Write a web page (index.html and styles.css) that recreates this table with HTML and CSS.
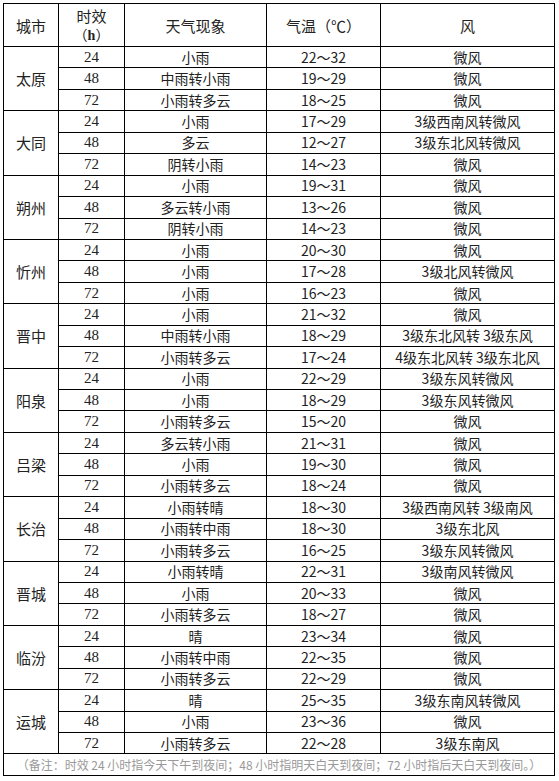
FILE: index.html
```html
<!DOCTYPE html>
<html lang="zh">
<head>
<meta charset="utf-8">
<link rel="stylesheet" href="styles.css">
</head>
<body>
<table class="wx">
<colgroup>
<col class="c1"><col class="c2"><col class="c3"><col class="c4"><col class="c5">
</colgroup>
<thead>
<tr class="hd">
<th>城市</th>
<th><div>时效</div><div class="hh">（<span class="h">h</span>）</div></th>
<th>天气现象</th>
<th>气温（℃）</th>
<th>风</th>
</tr>
</thead>
<tbody>
<tr><td class="city" rowspan="3">太原</td><td class="n">24</td><td>小雨</td><td>22～32</td><td>微风</td></tr>
<tr><td class="n">48</td><td>中雨转小雨</td><td>19～29</td><td>微风</td></tr>
<tr><td class="n">72</td><td>小雨转多云</td><td>18～25</td><td>微风</td></tr>

<tr><td class="city" rowspan="3">大同</td><td class="n">24</td><td>小雨</td><td>17～29</td><td>3级西南风转微风</td></tr>
<tr><td class="n">48</td><td>多云</td><td>12～27</td><td>3级东北风转微风</td></tr>
<tr><td class="n">72</td><td>阴转小雨</td><td>14～23</td><td>微风</td></tr>

<tr><td class="city" rowspan="3">朔州</td><td class="n">24</td><td>小雨</td><td>19～31</td><td>微风</td></tr>
<tr><td class="n">48</td><td>多云转小雨</td><td>13～26</td><td>微风</td></tr>
<tr><td class="n">72</td><td>阴转小雨</td><td>14～23</td><td>微风</td></tr>

<tr><td class="city" rowspan="3">忻州</td><td class="n">24</td><td>小雨</td><td>20～30</td><td>微风</td></tr>
<tr><td class="n">48</td><td>小雨</td><td>17～28</td><td>3级北风转微风</td></tr>
<tr><td class="n">72</td><td>小雨</td><td>16～23</td><td>微风</td></tr>

<tr><td class="city" rowspan="3">晋中</td><td class="n">24</td><td>小雨</td><td>21～32</td><td>微风</td></tr>
<tr><td class="n">48</td><td>中雨转小雨</td><td>18～29</td><td>3级东北风转 3级东风</td></tr>
<tr><td class="n">72</td><td>小雨转多云</td><td>17～24</td><td>4级东北风转 3级东北风</td></tr>

<tr><td class="city" rowspan="3">阳泉</td><td class="n">24</td><td>小雨</td><td>22～29</td><td>3级东风转微风</td></tr>
<tr><td class="n">48</td><td>小雨</td><td>18～29</td><td>3级东风转微风</td></tr>
<tr><td class="n">72</td><td>小雨转多云</td><td>15～20</td><td>微风</td></tr>

<tr><td class="city" rowspan="3">吕梁</td><td class="n">24</td><td>多云转小雨</td><td>21～31</td><td>微风</td></tr>
<tr><td class="n">48</td><td>小雨</td><td>19～30</td><td>微风</td></tr>
<tr><td class="n">72</td><td>小雨转多云</td><td>18～24</td><td>微风</td></tr>

<tr><td class="city" rowspan="3">长治</td><td class="n">24</td><td>小雨转晴</td><td>18～30</td><td>3级西南风转 3级南风</td></tr>
<tr><td class="n">48</td><td>小雨转中雨</td><td>18～30</td><td>3级东北风</td></tr>
<tr><td class="n">72</td><td>小雨转多云</td><td>16～25</td><td>3级东风转微风</td></tr>

<tr><td class="city" rowspan="3">晋城</td><td class="n">24</td><td>小雨转晴</td><td>22～31</td><td>3级南风转微风</td></tr>
<tr><td class="n">48</td><td>小雨</td><td>20～33</td><td>微风</td></tr>
<tr><td class="n">72</td><td>小雨转多云</td><td>18～27</td><td>微风</td></tr>

<tr><td class="city" rowspan="3">临汾</td><td class="n">24</td><td>晴</td><td>23～34</td><td>微风</td></tr>
<tr><td class="n">48</td><td>小雨转中雨</td><td>22～35</td><td>微风</td></tr>
<tr><td class="n">72</td><td>小雨转多云</td><td>22～29</td><td>微风</td></tr>

<tr><td class="city" rowspan="3">运城</td><td class="n">24</td><td>晴</td><td>25～35</td><td>3级东南风转微风</td></tr>
<tr><td class="n">48</td><td>小雨</td><td>23～36</td><td>微风</td></tr>
<tr><td class="n">72</td><td>小雨转多云</td><td>22～28</td><td>3级东南风</td></tr>

<tr class="note"><td colspan="5">（备注：时效 24 小时指今天下午到夜间；48 小时指明天白天到夜间；72 小时指后天白天到夜间。）</td></tr>
</tbody>
</table>
</body>
</html>
```
FILE: styles.css
```css
html, body {
  margin: 0;
  padding: 0;
  background: #fff;
}
body {
  padding: 3px 0 0 3px;
}
.wx {
  border-collapse: collapse;
  table-layout: fixed;
  width: 552px;
  font-family: "Noto Sans CJK SC", "Noto Sans", sans-serif;
  font-size: 14px;
  color: #222;
}
.c1 { width: 55px; }
.c2 { width: 66px; }
.c3 { width: 142px; }
.c4 { width: 114px; }
.c5 { width: 174px; }
.wx th, .wx td {
  border: 1px solid #000;
  padding: 0;
  text-align: center;
  vertical-align: middle;
  line-height: 19px;
  font-weight: normal;
}
.wx tbody tr {
  height: 21.45px;
}
.wx tr.hd {
  height: 43px;
}
.hd th {
  font-size: 15px;
}
.hh {
  font-size: 14px;
}
.h {
  font-family: "Liberation Serif", serif;
  font-weight: bold;
}
.wx td.n {
  font-family: "Liberation Serif", serif;
  font-size: 15px;
}
.wx td.city {
  font-size: 15px;
}
.note td {
  height: 20px;
  font-size: 12px;
  color: #999;
  text-align: center;
}
```
